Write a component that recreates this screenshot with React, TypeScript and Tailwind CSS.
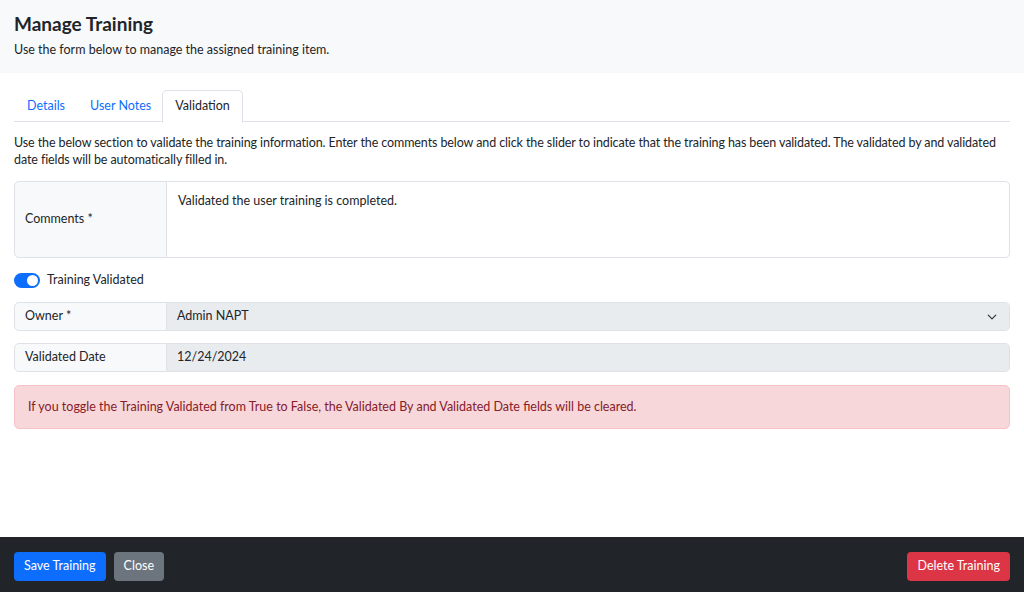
import React from "react";

export default function App() {
  const font = { fontFamily: 'Lato, "Open Sans", sans-serif' };
  return (
    <div className="w-[1024px] h-[592px] flex flex-col bg-white text-[#212529] text-[12.5px]" style={font}>
      <div className="bg-[#f8f9fa] h-[73px] px-[14px] pt-[12px] shrink-0">
        <h1 className="text-[19px] font-bold leading-[24px] text-[#212529]">Manage Training</h1>
        <p className="mt-[5px] leading-[18px]">Use the form below to manage the assigned training item.</p>
      </div>
      <div className="flex-1 px-[14px] pt-[17px]">
        <div className="flex border-b border-[#dee2e6] h-[32px]">
          <div className="pl-[13px] pr-[12px] flex items-center text-[#0d6efd] -mb-px">Details</div>
          <div className="pl-[13px] pr-[11px] flex items-center text-[#0d6efd] -mb-px">User Notes</div>
          <div className="px-[12px] flex items-center border border-[#dee2e6] border-b-white rounded-t-[5px] bg-white -mb-px h-[33px]">Validation</div>
        </div>
        <p className="mt-[12px] leading-[17px] tracking-[-0.1px]">
          Use the below section to validate the training information. Enter the comments below and click the slider to indicate that the training has been validated. The validated by and validated date fields will be automatically filled in.
        </p>
        <div className="mt-[13px] flex h-[77px]">
          <div className="w-[153px] bg-[#f8f9fa] border border-[#dee2e6] rounded-l-[5px] flex items-center px-[10px]">Comments *</div>
          <div className="flex-1 border border-l-0 border-[#dee2e6] rounded-r-[5px] px-[11px] pt-[10px]">Validated the user training is completed.</div>
        </div>
        <div className="mt-[13px] flex items-center gap-[7px] h-[18px]">
          <div className="w-[26px] h-[15px] rounded-full bg-[#0d6efd] flex items-center justify-end px-[2px]">
            <div className="w-[11px] h-[11px] rounded-full bg-white" />
          </div>
          <span>Training Validated</span>
        </div>
        <div className="mt-[13px] flex h-[29px]">
          <div className="w-[153px] bg-[#f8f9fa] border border-[#dee2e6] rounded-l-[5px] flex items-center px-[10px]">Owner *</div>
          <div className="flex-1 bg-[#e9ecef] border border-l-0 border-[#dee2e6] rounded-r-[5px] flex items-center justify-between px-[10px]">
            <span>Admin NAPT</span>
            <svg width="10" height="10" viewBox="0 0 16 16" fill="none" stroke="#343a40" strokeWidth="2" strokeLinecap="round" strokeLinejoin="round" className="mr-[2px]">
              <path d="M2 5l6 6 6-6" />
            </svg>
          </div>
        </div>
        <div className="mt-[12px] flex h-[29px]">
          <div className="w-[153px] bg-[#f8f9fa] border border-[#dee2e6] rounded-l-[5px] flex items-center px-[10px]">Validated Date</div>
          <div className="flex-1 bg-[#e9ecef] border border-l-0 border-[#dee2e6] rounded-r-[5px] flex items-center px-[10px]">12/24/2024</div>
        </div>
        <div className="mt-[13px] h-[44px] bg-[#f8d7da] border border-[#f5c2c7] rounded-[5px] text-[#842029] flex items-center px-[13px]">
          If you toggle the Training Validated from True to False, the Validated By and Validated Date fields will be cleared.
        </div>
      </div>
      <div className="h-[55px] bg-[#212529] shrink-0 flex items-start justify-between px-[14px] pt-[15px]">
        <div className="flex gap-[8px]">
          <button className="h-[29px] px-[10px] rounded-[4px] bg-[#0d6efd] text-white">Save Training</button>
          <button className="h-[29px] px-[10px] rounded-[4px] bg-[#6c757d] text-white">Close</button>
        </div>
        <button className="h-[29px] px-[10px] rounded-[4px] bg-[#dc3545] text-white">Delete Training</button>
      </div>
    </div>
  );
}
